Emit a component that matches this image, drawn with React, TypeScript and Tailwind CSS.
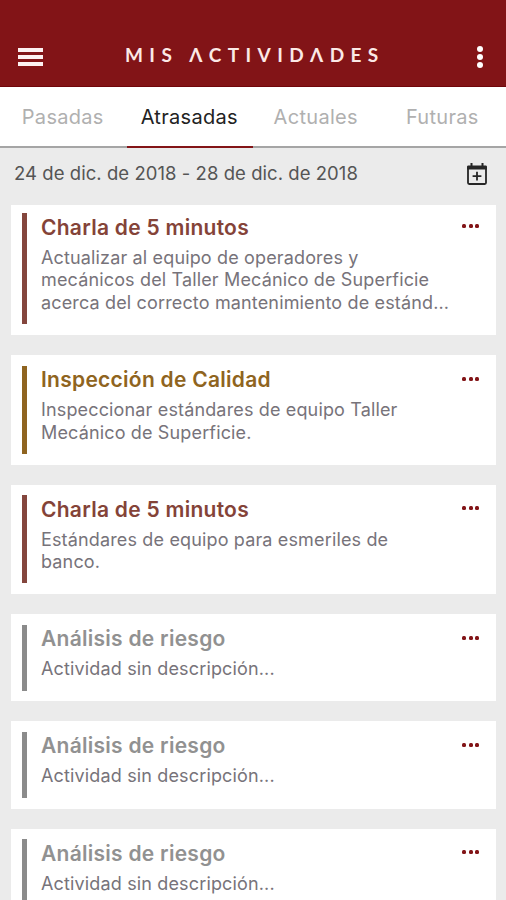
import React from "react";
import clsx from "clsx";

const tabs = ["Pasadas", "Atrasadas", "Actuales", "Futuras"];

const activities = [
  {
    title: "Charla de 5 minutos",
    lines: [
      "Actualizar al equipo de operadores y",
      "mecánicos del Taller Mecánico de Superficie",
      "acerca del correcto mantenimiento de estánd...",
    ],
    text: "text-[#844338]",
    bar: "bg-[#84463d]",
    box: "h-[130px] pt-2",
    barHeight: "h-[111px]",
  },
  {
    title: "Inspección de Calidad",
    lines: [
      "Inspeccionar estándares de equipo Taller",
      "Mecánico de Superficie.",
    ],
    text: "text-[#8f6420]",
    bar: "bg-[#8f6420]",
    box: "h-[109.5px] pt-[10.5px]",
    barHeight: "h-[88px]",
  },
  {
    title: "Charla de 5 minutos",
    lines: ["Estándares de equipo para esmeriles de", "banco."],
    text: "text-[#844338]",
    bar: "bg-[#84463d]",
    box: "h-[109.5px] pt-[10.5px]",
    barHeight: "h-[88px]",
  },
  ...[1, 2, 3].map(() => ({
    title: "Análisis de riesgo",
    lines: ["Actividad sin descripción..."],
    text: "text-[#919191]",
    bar: "bg-[#8b8b8b]",
    box: "h-[87.3px] pt-[10.5px]",
    barHeight: "h-[66px]",
  })),
];

function Header() {
  return (
    <header className="flex h-[87px] items-start border-b border-[#70060b] bg-[#821417] pl-[18px] pr-[23px]">
      <button aria-label="Menu" className="mt-[48px] flex w-[25px] flex-col gap-[3px]">
        <span className="h-1 w-full bg-[#fdf1f1]" />
        <span className="h-1 w-full bg-[#fdf1f1]" />
        <span className="h-1 w-full bg-[#fdf1f1]" />
      </button>
      <h1 className="mt-[43px] ml-[82px] flex-1 font-['Lato','Noto_Sans',sans-serif] text-[19px] leading-6 font-bold tracking-[6.4px] whitespace-nowrap text-[#fbe9e6]">
        MIS ΛCTIVIDΛDES
      </h1>
      <button aria-label="More" className="mt-[46px] flex flex-col gap-[2px]">
        <span className="size-[6px] rounded-full bg-white" />
        <span className="size-[6px] rounded-full bg-white" />
        <span className="size-[6px] rounded-full bg-white" />
      </button>
    </header>
  );
}

function CalendarPlus() {
  return (
    <svg width="22" height="24" viewBox="0 0 22 24" fill="none" stroke="#262626">
      <path d="M2 5.500h18v15.300a1.200 1.200 0 0 1-1.200 1.200H3.200a1.200 1.200 0 0 1-1.200-1.200z" strokeWidth="1.800" />
      <path d="M1.100 4.600a1.200 1.200 0 0 1 1.200-1.200h17.400a1.200 1.200 0 0 1 1.200 1.200v3H1.100z" fill="#262626" stroke="none" />
      <path d="M5.500 1v4M16.500 1v4" strokeWidth="2" />
      <path d="M11 9.800v8.800M6.600 14.200h8.800" strokeWidth="1.800" />
    </svg>
  );
}

export default function App() {
  return (
    <main className="h-[900px] w-[506px] overflow-hidden bg-[#ebebeb] font-['Inter','Liberation_Sans',sans-serif]">
      <Header />
      <nav className="flex h-[61px] bg-white">
        {tabs.map((tab) => (
          <button
            key={tab}
            className={clsx(
              "flex-1 border-b-2 pr-px text-[20px] tracking-[0.3px]",
              tab === "Atrasadas"
                ? "border-[#831417] text-[#222222]"
                : "border-[#a5a5a5] text-[#b0b0b0]"
            )}
          >
            {tab}
          </button>
        ))}
      </nav>
      <div className="flex h-[57px] items-start justify-between pt-[14px] pr-[18px] pl-[14px]">
        <p className="text-[18.5px] leading-[23px] tracking-[0.05px] whitespace-nowrap text-[#555555]">
          24 de dic. de 2018 - 28 de dic. de 2018
        </p>
        <CalendarPlus />
      </div>
      <section className="flex flex-col gap-5 pr-[10px] pl-[11px]">
        {activities.map((item, i) => (
          <article key={i} className={clsx("flex shrink-0 bg-white pl-[11px]", item.box)}>
            <div className={clsx("w-[5px] shrink-0", item.bar, item.barHeight)} />
            <div className="ml-[14px] flex-1">
              <h2
                className={clsx(
                  "pt-[0.5px] text-[21px] leading-7 font-semibold tracking-[0.27px] whitespace-nowrap",
                  item.text
                )}
              >
                {item.title}
              </h2>
              <div className="mt-[5px] text-[18px] leading-[22.6px] tracking-[0.15px] text-[#77737a]">
                {item.lines.map((line) => (
                  <p key={line} className="whitespace-nowrap">
                    {line}
                  </p>
                ))}
              </div>
            </div>
            <button aria-label="Options" className="mt-[11px] mr-[17px] flex h-1 gap-[2.5px]">
              <span className="size-1 rounded-[1.5px] bg-[#821417]" />
              <span className="size-1 rounded-[1.5px] bg-[#821417]" />
              <span className="size-1 rounded-[1.5px] bg-[#821417]" />
            </button>
          </article>
        ))}
      </section>
    </main>
  );
}
